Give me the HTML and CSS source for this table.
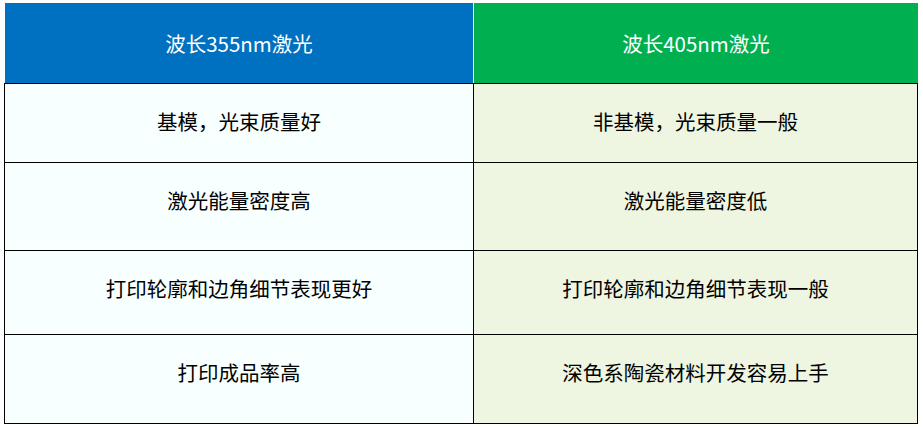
FILE: index.html
```html
<!DOCTYPE html>
<html lang="zh">
<head>
<meta charset="utf-8">
<link rel="stylesheet" href="styles.css">
</head>
<body>
<div class="page">
  <div class="head">
    <div class="hcell blue">波长355nm激光</div>
    <div class="hcell green">波长405nm激光</div>
  </div>
  <div class="body">
    <div class="cell l r1">基模，光束质量好</div>
    <div class="cell g r1">非基模，光束质量一般</div>
    <div class="cell l r2">激光能量密度高</div>
    <div class="cell g r2">激光能量密度低</div>
    <div class="cell l r3">打印轮廓和边角细节表现更好</div>
    <div class="cell g r3">打印轮廓和边角细节表现一般</div>
    <div class="cell l r4">打印成品率高</div>
    <div class="cell g r4">深色系陶瓷材料开发容易上手</div>
  </div>
</div>
</body>
</html>
```
FILE: styles.css
```css
html, body {
  margin: 0;
  padding: 0;
  background: #ffffff;
}
.page {
  padding: 3px 0 0 4px;
  font-family: "Noto Sans CJK SC", "Noto Sans", sans-serif;
  font-size: 20.5px;
}
.head {
  display: grid;
  grid-template-columns: 468px 444px;
  column-gap: 1px;
  margin-left: 1px;
  width: 913px;
  height: 80px;
  background: #ffffff;
}
.hcell {
  display: flex;
  align-items: center;
  justify-content: center;
  color: #ffffff;
  box-sizing: border-box;
}
.blue { background: #0070c0; }
.green { background: #00b050; }
.body {
  display: grid;
  grid-template-columns: 468px 443px;
  grid-template-rows: 78px 87px 83px 88px;
  gap: 1px;
  padding: 1px;
  width: 914px;
  box-sizing: border-box;
  background: #000000;
}
.cell {
  display: flex;
  align-items: center;
  justify-content: center;
  color: #000000;
  box-sizing: border-box;
}
.r1 { padding-bottom: 5px; }
.r2 { padding-bottom: 14px; }
.r3 { padding-bottom: 10px; }
.r4 { padding-bottom: 15px; }
.l { background: #f8ffff; }
.g { background: #eef5e1; }
```
